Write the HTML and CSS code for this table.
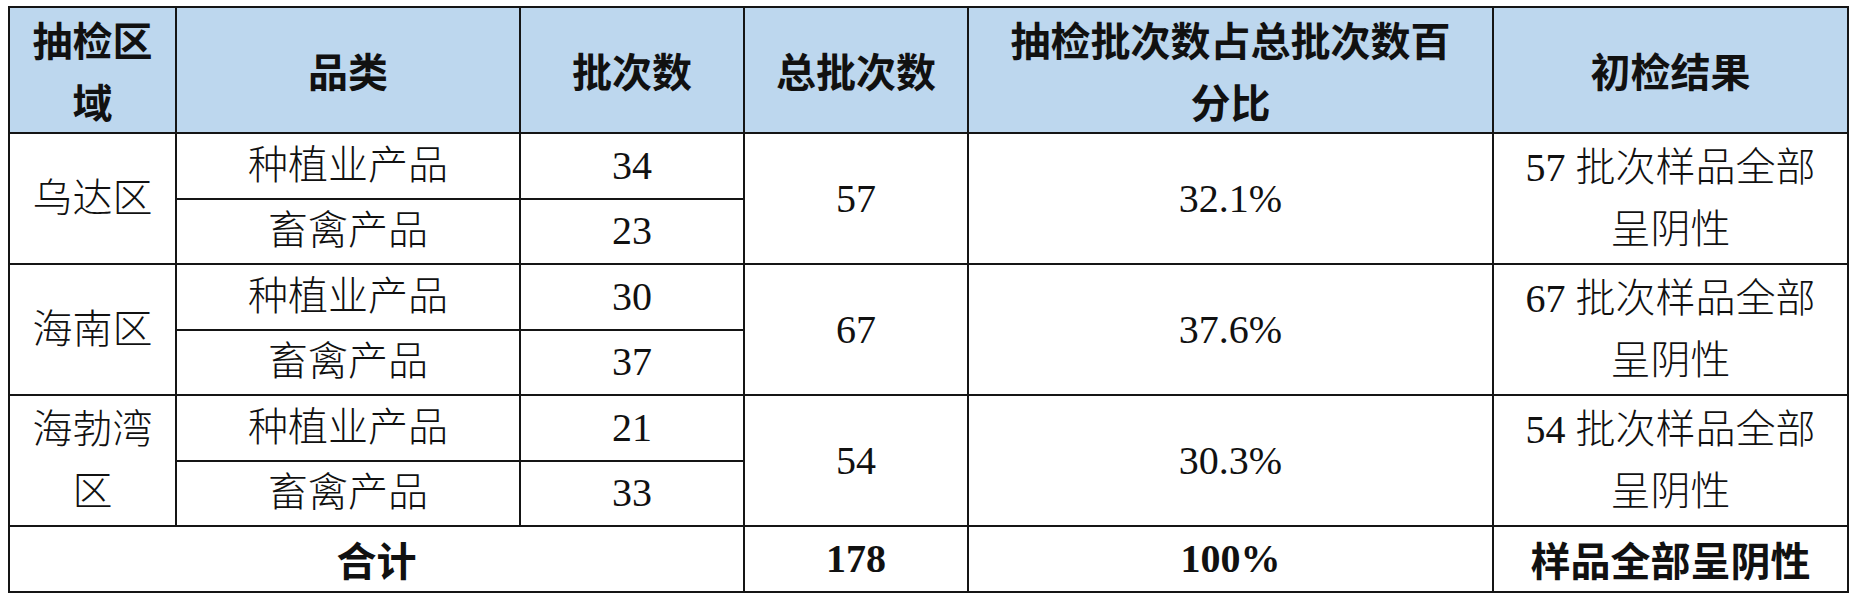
FILE: index.html
```html
<!DOCTYPE html>
<html lang="zh-CN">
<head>
<meta charset="utf-8">
<title>抽检结果</title>
<link rel="stylesheet" href="styles.css">
</head>
<body>
<table class="report">
  <colgroup>
    <col class="c1"><col class="c2"><col class="c3"><col class="c4"><col class="c5"><col class="c6">
  </colgroup>
  <thead>
    <tr class="head">
      <th>抽检区<br>域</th>
      <th>品类</th>
      <th>批次数</th>
      <th>总批次数</th>
      <th>抽检批次数占总批次数百<br>分比</th>
      <th>初检结果</th>
    </tr>
  </thead>
  <tbody>
    <tr class="row">
      <td rowspan="2">乌达区</td>
      <td>种植业产品</td>
      <td class="num">34</td>
      <td rowspan="2" class="num">57</td>
      <td rowspan="2" class="num">32.1%</td>
      <td rowspan="2"><span class="num">57</span> 批次样品全部<br>呈阴性</td>
    </tr>
    <tr class="row">
      <td>畜禽产品</td>
      <td class="num">23</td>
    </tr>
    <tr class="row">
      <td rowspan="2">海南区</td>
      <td>种植业产品</td>
      <td class="num">30</td>
      <td rowspan="2" class="num">67</td>
      <td rowspan="2" class="num">37.6%</td>
      <td rowspan="2"><span class="num">67</span> 批次样品全部<br>呈阴性</td>
    </tr>
    <tr class="row">
      <td>畜禽产品</td>
      <td class="num">37</td>
    </tr>
    <tr class="row">
      <td rowspan="2">海勃湾<br>区</td>
      <td>种植业产品</td>
      <td class="num">21</td>
      <td rowspan="2" class="num">54</td>
      <td rowspan="2" class="num">30.3%</td>
      <td rowspan="2"><span class="num">54</span> 批次样品全部<br>呈阴性</td>
    </tr>
    <tr class="row">
      <td>畜禽产品</td>
      <td class="num">33</td>
    </tr>
    <tr class="row total">
      <td colspan="3">合计</td>
      <td class="num">178</td>
      <td class="num">100%</td>
      <td>样品全部呈阴性</td>
    </tr>
  </tbody>
</table>
</body>
</html>
```

FILE: styles.css
```css
html, body {
  background: #ffffff;
}
body {
  margin: 6px 8px;
  font-family: "Liberation Serif", "Noto Sans CJK SC", serif;
  color: #111111;
}
.report {
  border-collapse: collapse;
  table-layout: fixed;
  width: 1839px;
}
.c1 { width: 167px; }
.c2 { width: 344px; }
.c3 { width: 224px; }
.c4 { width: 224px; }
.c5 { width: 525px; }
.c6 { width: 355px; }

.report th,
.report td {
  border: 2px solid #151515;
  padding: 0 4px;
  text-align: center;
  vertical-align: middle;
  font-size: 40px;
  line-height: 62px;
  font-family: "Liberation Serif", "Noto Sans CJK SC", serif;
  font-weight: 300;
}
.report th {
  background: #bdd7ee;
  font-family: "Noto Sans CJK SC", sans-serif;
  font-weight: 700;
}
.head {
  height: 125px;
}
.row {
  height: 65.5px;
}
.total {
  height: 66px;
}
.report .total td {
  font-weight: 700;
}
.report .total td:first-child,
.report .total td:last-child {
  font-family: "Noto Sans CJK SC", sans-serif;
}
.num {
  font-family: "Liberation Serif", serif;
  font-weight: 400;
}
```
